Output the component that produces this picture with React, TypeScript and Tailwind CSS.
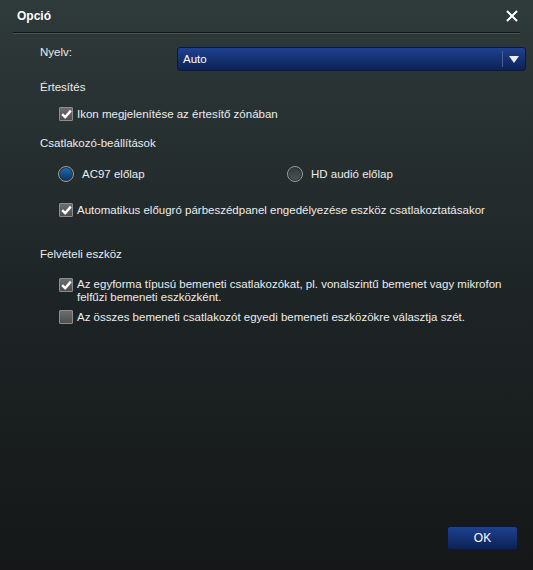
import { X } from "lucide-react";

function CheckBox({ checked }: { checked?: boolean }) {
  return (
    <span className="flex h-[14px] w-[14px] shrink-0 items-center justify-center rounded-[1px] border border-[#8d8d8d] bg-gradient-to-b from-[#6e6e6e] to-[#4e4e4e]">
      {checked && (
        <svg width="11" height="10" viewBox="0 0 11 10">
          <path d="M1.2 5.2 L4.2 8.2 L9.8 1.6" fill="none" stroke="#ffffff" strokeWidth="2.4" />
        </svg>
      )}
    </span>
  );
}

function Radio({ checked }: { checked?: boolean }) {
  return (
    <span className="flex h-[16px] w-[16px] shrink-0 items-center justify-center rounded-full border border-[#9a9ea0] bg-[#2a3132]">
      {checked ? (
        <span className="h-[12px] w-[12px] rounded-full bg-gradient-to-b from-[#1f6cae] to-[#0b3567]" />
      ) : (
        <span className="h-[12px] w-[12px] rounded-full bg-gradient-to-b from-[#333b3d] to-[#4b5254]" />
      )}
    </span>
  );
}

export default function App() {
  return (
    <div
      className="flex h-[570px] w-[533px] flex-col bg-gradient-to-b from-[#2f3a3b] via-[#1e2526] to-[#151718] text-[11.5px] leading-[14px] text-[#ececec]"
      style={{ fontFamily: '"Liberation Sans", Arial, sans-serif' }}
    >
      {/* title bar */}
      <div className="flex h-[32px] items-center justify-between pl-[17px] pr-[12px]">
        <span className="text-[12px] font-bold text-white">Opció</span>
        <X className="h-[18px] w-[18px] text-white" strokeWidth={2.6} />
      </div>
      <div className="mx-[13px] h-[2px] border-t border-[#111718] bg-[#4a5455]" />

      <div className="flex flex-1 flex-col pl-[40px] pr-[7px]">
        <div className="mt-[13px] flex items-start">
          <span className="-mt-[2px] w-[137px]">Nyelv:</span>
          <div className="flex h-[24px] flex-1 items-center rounded-[3px] border border-[#0b1a3c] bg-gradient-to-b from-[#1f4190] to-[#0c2256] pl-[5px] text-white">
            <span className="flex-1">Auto</span>
            <span className="h-[16px] w-px bg-[#4a5f8c]" />
            <span className="flex w-[22px] justify-center">
              <svg width="10" height="7" viewBox="0 0 10 7">
                <path d="M0 0 H10 L5 7 Z" fill="#e8ecf4" />
              </svg>
            </span>
          </div>
        </div>

        <div className="mt-[9px]">Értesítés</div>
        <label className="mt-[13px] ml-[19px] flex items-center gap-[4px]">
          <CheckBox checked />
          <span>Ikon megjelenítése az értesítő zónában</span>
        </label>

        <div className="mt-[15px]">Csatlakozó-beállítások</div>
        <div className="mt-[16px] ml-[18px] flex items-center">
          <div className="flex w-[229px] items-center gap-[8px]">
            <Radio checked />
            <span>AC97 előlap</span>
          </div>
          <div className="flex items-center gap-[8px]">
            <Radio />
            <span>HD audió előlap</span>
          </div>
        </div>
        <label className="mt-[21px] ml-[19px] flex items-center gap-[4px]">
          <CheckBox checked />
          <span>Automatikus előugró párbeszédpanel engedélyezése eszköz csatlakoztatásakor</span>
        </label>

        <div className="mt-[30px]">Felvételi eszköz</div>
        <label className="mt-[17px] ml-[19px] flex items-start gap-[4px]">
          <CheckBox checked />
          <span className="leading-[13px]">
            Az egyforma típusú bemeneti csatlakozókat, pl. vonalszintű bemenet vagy mikrofon
            <br />
            felfűzi bemeneti eszközként.
          </span>
        </label>
        <label className="mt-[6px] ml-[19px] flex items-center gap-[4px]">
          <CheckBox />
          <span>Az összes bemeneti csatlakozót egyedi bemeneti eszközökre választja szét.</span>
        </label>

        <div className="mt-auto mb-[20px] flex justify-end pr-[8px]">
          <button className="h-[24px] w-[71px] rounded-[3px] border border-[#0b1a3c] bg-gradient-to-b from-[#1f4190] to-[#0c2256] text-[12px] text-white">
            OK
          </button>
        </div>
      </div>
    </div>
  );
}
